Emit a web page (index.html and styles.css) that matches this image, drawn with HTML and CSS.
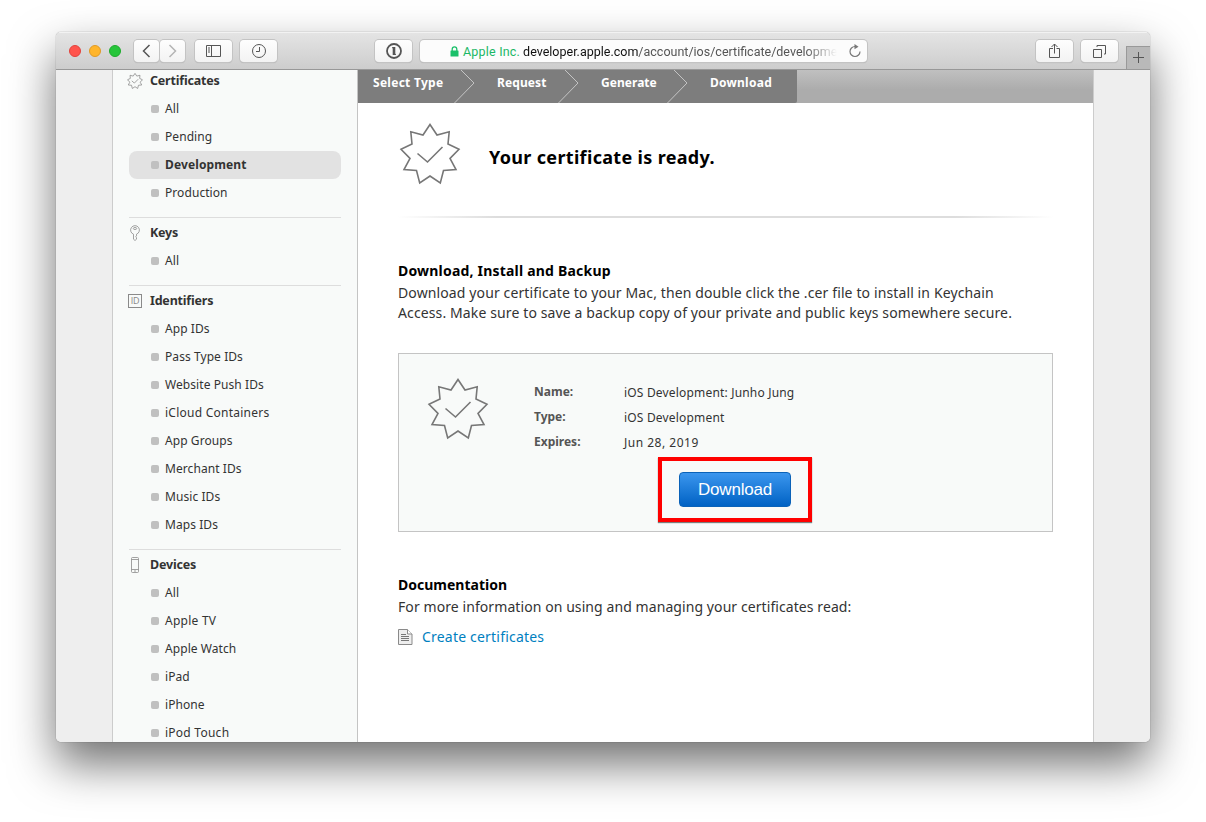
FILE: index.html
```html
<!DOCTYPE html>
<html lang="en">
<head>
<meta charset="utf-8">
<title>Certificates</title>
<link rel="stylesheet" href="styles.css">
</head>
<body>
<svg class="defs" width="0" height="0">
  <symbol id="seal" viewBox="0 0 62 62">
    <path d="M31 1.500L38 12L50.200 8.800L49 21L60 26.200L51 35.500L57 46.500L44.500 47.500L41.300 60L31 53L20.700 60L17.500 47.500L5 46.500L11 35.500L2 26.200L13 21L11.800 8.800L24 12Z"/>
    <path d="M18.500 30.500L28.500 39L43.500 24"/>
  </symbol>
</svg>
<div class="window">
  <header class="toolbar">
    <div class="lights"><i class="light red"></i><i class="light amber"></i><i class="light green"></i></div>
    <div class="nav">
      <div class="btn back"><svg width="26" height="22" viewBox="0 0 26 22"><path d="M15.500 5L9.500 11L15.500 17" stroke="#555" stroke-width="1.500"/></svg></div>
      <div class="btn fwd"><svg width="26" height="22" viewBox="0 0 26 22"><path d="M9.500 5L15.500 11L9.500 17" stroke="#b4b4b4" stroke-width="1.500"/></svg></div>
    </div>
    <div class="btn side"><svg width="16" height="12" viewBox="0 0 16 12"><path d="M.5.500h14v11H.5zM5.500.5v11M2 3h2M2 5h2M2 7h2" stroke="#555"/></svg></div>
    <div class="btn clock"><svg width="16" height="16" viewBox="0 0 16 16"><circle cx="8" cy="8" r="6.500" stroke="#555"/><path d="M8.500 4v4.500H5" stroke="#555"/></svg></div>
    <div class="btn pass"><svg width="16" height="16" viewBox="0 0 16 16"><circle cx="8" cy="8" r="7" stroke="#555" stroke-width="1.800"/><path d="M8 4v8" stroke="#555" stroke-width="2.600"/><path d="M6 4.700h2M8 11.400h2" stroke="#555"/></svg></div>
    <div class="address">
      <svg class="lock" width="9" height="11" viewBox="0 0 9 11"><rect x=".5" y="4.500" width="8" height="6" rx=".5" fill="#1bc06a"/><path d="M2.200 5V3.200a2.300 2.300 0 0 1 4.600 0V5" stroke="#1bc06a" stroke-width="1.300"/></svg>
      <span class="owner">Apple Inc.</span><span class="url"><b>developer.apple.com</b>/account/ios/certificate/developme</span>
      <svg class="reload" width="14" height="14" viewBox="0 0 14 14"><path d="M7 2.500A5 5 0 1 0 12 7.500" stroke="#777" stroke-width="1.200"/><path d="M6.500 0L10.500 2.700L6.500 5.200Z" fill="#777"/></svg>
    </div>
    <div class="btn share"><svg width="12" height="16" viewBox="0 0 12 16"><path d="M4 5.500H.500v9h10v-9H7.500M5.500 10.500V1M2.500 4L5.500 1l3 3" stroke="#555"/></svg></div>
    <div class="btn tabs"><svg width="13" height="13" viewBox="0 0 13 13"><path d="M.5 4.500h8v8h-8zM4 2V.500h8.500V9H11" stroke="#555"/></svg></div>
    <div class="plus"><svg width="12" height="12" viewBox="0 0 12 12"><path d="M5.500 0v11M0 5.500h11" stroke="#555"/></svg></div>
  </header>
  <div class="page">
    <nav class="sidebar">
      <section class="group">
        <h3><svg class="ico seal-sm" width="16" height="16"><use href="#seal"/></svg><span>Certificates</span></h3>
        <ul><li><span>All</span></li><li><span>Pending</span></li><li class="on"><span>Development</span></li><li><span>Production</span></li></ul>
      </section>
      <section class="group">
        <h3><svg class="ico" width="16" height="16" viewBox="0 0 16 16"><path d="M6.500 9.200A4.400 4.400 0 1 1 9.500 9.200V10.900l-.8.900l.8.900V14.200L8 15.500L6.500 14.200Z"/><ellipse cx="8" cy="3.500" rx="1.700" ry="1"/></svg><span>Keys</span></h3>
        <ul><li><span>All</span></li></ul>
      </section>
      <section class="group">
        <h3><span class="ico idbox">ID</span><span>Identifiers</span></h3>
        <ul><li><span>App IDs</span></li><li><span>Pass Type IDs</span></li><li><span>Website Push IDs</span></li><li class="wide"><span>iCloud Containers</span></li><li><span>App Groups</span></li><li><span>Merchant IDs</span></li><li><span>Music IDs</span></li><li><span>Maps IDs</span></li></ul>
      </section>
      <section class="group">
        <h3><svg class="ico" width="16" height="16" viewBox="0 0 16 16"><rect x="4.500" y=".5" width="7" height="15" rx="1"/><path d="M4.500 2.500h7M4.500 12.500h7M7 14h2"/></svg><span>Devices</span></h3>
        <ul><li><span>All</span></li><li class="wide"><span>Apple TV</span></li><li><span>Apple Watch</span></li><li><span>iPad</span></li><li><span>iPhone</span></li><li class="wide"><span>iPod Touch</span></li></ul>
      </section>
    </nav>
    <main class="main">
      <div class="steps">
        <div class="step s1"><span>Select Type</span><svg width="21" height="33" viewBox="0 0 21 33"><path d="M7 0L20 13L.5 33"/></svg></div>
        <div class="step s2"><span>Request</span><svg width="21" height="33" viewBox="0 0 21 33"><path d="M7 0L20 13L.5 33"/></svg></div>
        <div class="step s3"><span>Generate</span><svg width="21" height="33" viewBox="0 0 21 33"><path d="M7 0L20 13L.5 33"/></svg></div>
        <div class="step s4"><span>Download</span></div>
      </div>
      <div class="body">
        <div class="hero"><svg class="seal" width="62" height="62"><use href="#seal"/></svg><h1>Your certificate is ready.</h1></div>
        <div class="rule"></div>
        <h2 class="t-dl">Download, Install and Backup</h2>
        <p>Download your certificate to your Mac, then double click the .cer file to install in Keychain<br>Access. Make sure to save a backup copy of your private and public keys somewhere secure.</p>
        <div class="card">
          <svg class="seal" width="62" height="62"><use href="#seal"/></svg>
          <dl>
            <dt>Name:</dt><dd>iOS Development: Junho Jung</dd>
            <dt>Type:</dt><dd>iOS Development</dd>
            <dt>Expires:</dt><dd class="date">Jun 28, 2019</dd>
          </dl>
          <div class="mark"><a class="download">Download</a></div>
        </div>
        <h2 class="t-doc">Documentation</h2>
        <p class="doc">For more information on using and managing your certificates read:</p>
        <div class="link"><svg width="15" height="16" viewBox="0 0 15 16"><path d="M.5.500h9l4.500 4.500v10.500H.500z" fill="#eee" stroke="#8a8a8a"/><path d="M9.500.5V5H14" stroke="#8a8a8a" fill="#fff"/><path d="M3 5.500h5M3 7.500h8M3 9.500h8M3 11.500h8" stroke="#777"/></svg><a>Create certificates</a></div>
      </div>
    </main>
  </div>
</div>
</body>
</html>
```
FILE: styles.css
```css
* { box-sizing: border-box; margin: 0; padding: 0; }
body { height: 822px; padding: 32px 56px; background: #fff; overflow: hidden; font-family: "Noto Sans", sans-serif; color: #333; }
svg { fill: none; flex: none; display: block; }
.defs { position: absolute; }
.window { width: 1094px; height: 710px; border-radius: 5px; overflow: hidden; box-shadow: 0 0 1px rgba(0,0,0,.6), 0 22px 46px rgba(0,0,0,.56); }

.toolbar { height: 38px; display: flex; align-items: flex-start; padding: 7px 0 0 13px; background: linear-gradient(#e4e4e4, #cdcdcd); border-bottom: 1px solid #989898; border-top: 1px solid #f2f2f2; font-family: Roboto, sans-serif; }
.lights { display: flex; gap: 8px; padding-top: 5px; width: 64px; }
.light { width: 12px; height: 12px; border-radius: 50%; }
.red { background: #ff544d; border: 1px solid #e2423c; }
.amber { background: #ffb52b; border: 1px solid #e09a25; }
.green { background: #26c53a; border: 1px solid #1dab2c; }
.btn { height: 22px; border-radius: 4px; background: linear-gradient(#fefefe, #f3f3f3); box-shadow: 0 0 0 1px #c3c3c3, 0 1px 1px #aaa; display: flex; align-items: center; justify-content: center; width: 37px; }
.nav { display: flex; gap: 1px; width: 53px; margin-left: 1px; margin-right: 8px; }
.nav .btn { width: 25px; }
.clock { margin-left: 8px; }
.pass { margin-left: 98px; }
.address { width: 447px; height: 22px; margin-left: 8px; border-radius: 4px; background: #fcfcfc; box-shadow: 0 0 0 1px #c3c3c3, 0 1px 1px #aaa; display: flex; align-items: center; padding-left: 30px; font-size: 12.500px; white-space: nowrap; }
.owner { color: #1bb866; margin: 0 3px 0 4px; letter-spacing: .2px; }
.url { width: 314px; overflow: hidden; color: #555; -webkit-mask-image: linear-gradient(90deg, #000 90%, transparent); mask-image: linear-gradient(90deg, #000 90%, transparent); }
.url b { font-weight: 400; color: #111; }
.reload { margin-left: 11px; }
.share { margin-left: 169px; }
.tabs { margin-left: 8px; }
.plus { margin-left: auto; margin-top: 6px; width: 24px; height: 23px; background: #b9b9b9; border: 1px solid #999; border-width: 1px 0 0 1px; display: flex; align-items: center; justify-content: center; }

.page { height: 672px; display: flex; background: #eee; padding: 0 56px; }
.sidebar { width: 246px; padding-left: 16px; background: #f8faf9; border-left: 1px solid #ccc; border-right: 1px solid #c4c4c4; overflow: hidden; }
.group { width: 212px; padding: 1px 0 10px; border-bottom: 1px solid #ddd; }
.group:first-child { margin-top: -4px; }
.group h3 { height: 28px; display: flex; align-items: center; margin-left: -2px; font-size: 12.500px; font-weight: 700; letter-spacing: -.2px; }
.group h3 span:last-child, li span { padding-bottom: 2px; }
.ico { margin-right: 7px; stroke: #8a8a8a; stroke-width: .8; }
.seal-sm { stroke-width: 3; }
.idbox { width: 14px; height: 14px; margin: 0 8px 0 1px; border: 1px solid #8a8a8a; font: 9px/12px "Open Sans", sans-serif; text-align: center; color: #888; }
ul { list-style: none; }
li { height: 28px; display: flex; align-items: center; padding-left: 22px; border-radius: 8px; font-size: 12px; letter-spacing: .07px; }
li.wide { letter-spacing: .25px; }
li::before { content: ""; width: 8px; height: 8px; margin-right: 6px; border-radius: 2px; background: #c0c0c0; }
.on { background: #e2e2e2; font-weight: 700; letter-spacing: .12px; }

.main { flex: 1; background: #fff; border-right: 1px solid #ccc; }
.steps { height: 33px; display: flex; background: linear-gradient(#c0c0c0, #acacac 60%); color: #fff; font-size: 12px; font-weight: 700; letter-spacing: .1px; }
.step { height: 33px; display: flex; justify-content: space-between; background: #7d7d7d; padding-left: 23px; white-space: nowrap; }
.step span { line-height: 25px; }
.step path { stroke: #c4c4c4; }
.s1 { width: 117px; padding-left: 15px; letter-spacing: .28px; }
.s2 { width: 104px; padding-left: 22px; }
.s3 { width: 109px; padding-left: 22px; letter-spacing: .04px; }
.s4 { width: 109px; padding-left: 22px; letter-spacing: .25px; border-radius: 0 0 2px 0; }
.body { padding: 20px 40px 0; }
.seal { stroke: #777; stroke-width: 1.600; }
.hero { display: flex; height: 93px; margin-left: 1px; }
h1 { margin: 19px 0 0 28px; font-size: 18px; line-height: 30px; letter-spacing: .33px; color: #000; }
.rule { height: 2px; background: linear-gradient(90deg, transparent, #ddd 15%, #ddd 85%, transparent); }
h2 { font-size: 14px; line-height: 22px; color: #000; }
.t-dl { margin-top: 42px; letter-spacing: .2px; }
p { font-size: 14px; line-height: 20px; letter-spacing: .12px; white-space: nowrap; margin-top: 1px; }
.doc { letter-spacing: .08px; }
.card { position: relative; width: 655px; height: 179px; margin-top: 30px; padding: 24px 28px; background: #f8faf9; border: 1px solid #c4c4c4; display: flex; }
dl { margin: 1px 0 0 45px; display: grid; grid-template-columns: 90px 1fr; grid-auto-rows: 25px; font-size: 12px; line-height: 25px; align-content: start; }
dt { font-weight: 700; color: #555; }
dd { padding-top: 1px; letter-spacing: .18px; }
.date { letter-spacing: .5px; }
/* Highlight frame drawn over the card around the button */
.mark { position: absolute; left: 259px; top: 103px; width: 154px; height: 65px; border: 4px solid #f00; padding: 11px 17px; box-shadow: 0 1px 1px rgba(0,0,0,.5); }
.download { display: block; width: 112px; height: 35px; border-radius: 4px; border: 1px solid #0a62b8; background: linear-gradient(#3b96ee, #0062c4); color: #fff; font: 17px/33px "Liberation Sans", sans-serif; letter-spacing: -.2px; text-align: center; }
.t-doc { margin-top: 42px; }
.link { display: flex; align-items: center; margin-top: 10px; height: 20px; gap: 9px; font-size: 14px; letter-spacing: .2px; color: #0080c0; }
.link a { padding-bottom: 2px; }
```
